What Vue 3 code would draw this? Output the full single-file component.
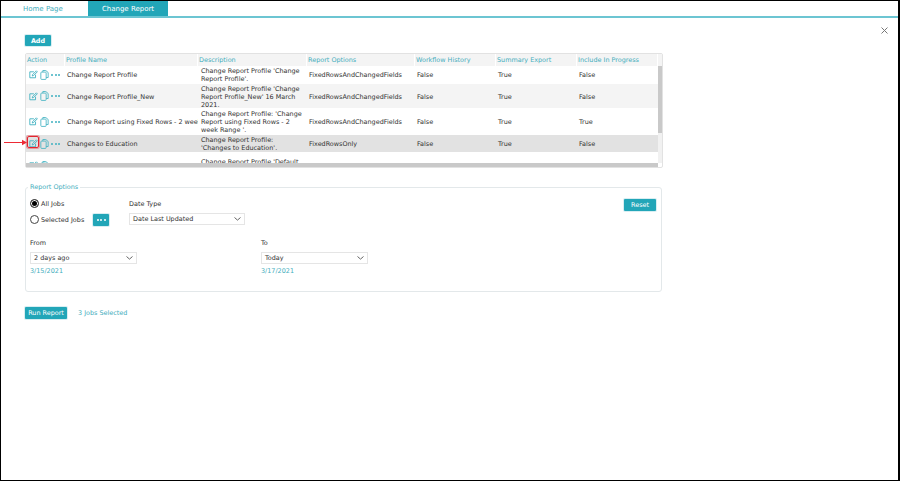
<template>
  <div class="page">
    <div class="tabs">
      <div class="tab">Home Page</div>
      <div class="tab active">Change Report</div>
    </div>
    <div class="content">
      <svg class="close" width="7" height="7" viewBox="0 0 7 7"><path d="M.5.5l6 6M6.5.5l-6 6" stroke="#777" fill="none" /></svg>
      <button class="btn add">Add</button>

      <div class="grid">
        <div class="head">
          <div v-for="c in columns" :key="c" class="hcell">{{ c }}</div>
        </div>
        <div class="body">
          <div v-for="(r, i) in rows" :key="i" class="row" :class="[r.cls]" :style="{ height: r.h + 'px' }">
            <div class="cell actions">
              <svg width="9" height="9" viewBox="0 0 11 11" fill="none" stroke="#3fb1c1" stroke-width="1.1">
                <path d="M8 5.8v3.7H1V2.2h5" />
                <path d="M4 7.3l.4-1.7L9 1l1.2 1.2-4.6 4.6z" />
              </svg>
              <svg width="9" height="10" viewBox="0 0 10 12" fill="none" stroke="#3fb1c1" stroke-width="1">
                <path d="M3 2.5V.6h3.5L9.4 3v6H7" />
                <rect x="0.6" y="2.5" width="6.4" height="8.8" rx="1" />
              </svg>
              <span class="dots"><i></i><i></i><i></i></span>
            </div>
            <div class="cell name">{{ r.name }}</div>
            <div class="cell desc">{{ r.desc }}</div>
            <div class="cell">{{ r.opt }}</div>
            <div class="cell">{{ r.wf }}</div>
            <div class="cell">{{ r.sum }}</div>
            <div class="cell">{{ r.inc }}</div>
          </div>
        </div>
        <div class="vbar"><div class="vthumb"></div></div>
        <div class="hbar"></div>
        <div class="redbox"></div>
        <svg class="arrow" width="24" height="7" viewBox="0 0 24 7">
          <path d="M0 3.5h19" stroke="#ed2a35" stroke-width="1" />
          <path d="M18 .8l5 2.7-5 2.7z" fill="#ed2a35" />
        </svg>
      </div>

      <fieldset class="options">
        <legend>Report Options</legend>
        <div class="top">
          <div class="radios">
            <label class="radio"><span class="dot on"></span>All Jobs</label>
            <label class="radio"><span class="dot"></span>Selected Jobs<button class="btn more"><span class="dots white"><i></i><i></i><i></i></span></button></label>
          </div>
          <div class="field datetype">
            <span class="lab">Date Type</span>
            <div class="select wide">Date Last Updated<svg width="7" height="4" viewBox="0 0 7 4"><path d="M.5.5l3 2.6 3-2.6" fill="none" stroke="#666" /></svg></div>
          </div>
          <button class="btn reset">Reset</button>
        </div>
        <div class="dates">
          <div class="field">
            <span class="lab">From</span>
            <div class="select">2 days ago<svg width="7" height="4" viewBox="0 0 7 4"><path d="M.5.5l3 2.6 3-2.6" fill="none" stroke="#666" /></svg></div>
            <span class="date">3/15/2021</span>
          </div>
          <div class="field">
            <span class="lab">To</span>
            <div class="select">Today<svg width="7" height="4" viewBox="0 0 7 4"><path d="M.5.5l3 2.6 3-2.6" fill="none" stroke="#666" /></svg></div>
            <span class="date">3/17/2021</span>
          </div>
        </div>
      </fieldset>

      <div class="run">
        <button class="btn runbtn">Run Report</button>
        <span class="selected">3 Jobs Selected</span>
      </div>
    </div>
  </div>
</template>

<script setup>
const columns = ['Action', 'Profile Name', 'Description', 'Report Options', 'Workflow History', 'Summary Export', 'Include In Progress'];

const rows = [
  { h: 18, name: 'Change Report Profile', desc: "Change Report Profile 'Change Report Profile'.", opt: 'FixedRowsAndChangedFields', wf: 'False', sum: 'True', inc: 'False' },
  { h: 25, cls: 'alt', name: 'Change Report Profile_New', desc: "Change Report Profile 'Change Report Profile_New' 16 March 2021.", opt: 'FixedRowsAndChangedFields', wf: 'False', sum: 'True', inc: 'False' },
  { h: 26, name: 'Change Report using Fixed Rows - 2 week Range', desc: "Change Report Profile: 'Change Report using Fixed Rows - 2 week Range '.", opt: 'FixedRowsAndChangedFields', wf: 'False', sum: 'True', inc: 'True' },
  { h: 18, cls: 'sel', name: 'Changes to Education', desc: "Change Report Profile: 'Changes to Education'.", opt: 'FixedRowsOnly', wf: 'False', sum: 'True', inc: 'False' },
  { h: 26, name: 'Default', desc: "Change Report Profile 'Default Report Profile'.", opt: 'FixedRowsOnly', wf: 'False', sum: 'True', inc: 'False' },
];
</script>

<style>
html, body {
  margin: 0;
  background: #fff;
}
</style>

<style scoped>
.page {
  box-sizing: border-box;
  width: 900px;
  height: 481px;
  border: 1px solid #000;
  border-right-width: 2px;
  font-family: "DejaVu Sans", sans-serif;
  font-size: 6.45px;
  color: #333;
  overflow: hidden;
}
.tabs {
  display: flex;
  height: 15px;
  padding-left: 1px;
  border-bottom: 2px solid #6cc5d2;
}
.tab {
  width: 66px;
  padding-left: 21px;
  line-height: 16px;
  color: #45aebd;
  font-size: 7px;
}
.tab.active {
  width: 80px;
  padding: 0;
  margin-left: -1px;
  text-align: center;
  background: #22a6b8;
  color: #fff;
}
.content {
  position: relative;
  padding: 17px 0 0 24px;
}
.close {
  position: absolute;
  top: 9px;
  right: 10px;
}
.btn {
  display: block;
  border: 0;
  padding: 0;
  border-radius: 1px;
  background: #22a6b8;
  color: #fff;
  font-family: inherit;
  font-size: 6.45px;
  font-weight: bold;
  box-shadow: 0 0 0 1px #d8eef2;
}
.add {
  width: 26px;
  height: 11px;
}
.grid {
  position: relative;
  box-sizing: border-box;
  width: 638px;
  height: 115px;
  margin-top: 7px;
  border: 1px solid #e2e2e2;
  border-radius: 2px;
}
.head, .row {
  display: grid;
  grid-template-columns: 39px 133px 109px 108px 81px 81px 1fr;
}
.head {
  height: 12px;
  background: #f4f4f4;
  padding-right: 4px;
}
.hcell {
  padding-left: 1px;
  line-height: 13px;
  color: #45aebd;
  white-space: nowrap;
  border-right: 1px solid #fff;
}
.body {
  height: 97px;
  overflow: hidden;
  margin-right: 4px;
}
.row {
  align-items: center;
  background: #fff;
  border-bottom: 1px solid #fff;
  box-sizing: border-box;
  padding-top: 1px;
}
.row.alt {
  background: #f4f4f4;
}
.row.sel {
  background: #e2e2e2;
}
.cell {
  padding-left: 2px;
  overflow: hidden;
  white-space: nowrap;
  line-height: 8px;
}
.cell.desc {
  white-space: normal;
  padding-left: 3px;
  padding-right: 2px;
}
.cell.actions {
  display: flex;
  align-items: center;
  gap: 2px;
  padding: 0 0 1px 3px;
  overflow: visible;
}
.dots {
  display: inline-flex;
  gap: 1.5px;
  margin-left: 0;
}
.dots i {
  width: 2px;
  height: 2px;
  border-radius: 50%;
  background: #3fb1c1;
}
.dots.white i {
  background: #fff;
}
.vbar {
  position: absolute;
  top: 12px;
  right: 0;
  bottom: 4px;
  width: 4px;
  background: #f1f1f1;
}
.vthumb {
  height: 67px;
  background: #c9c9c9;
}
.hbar {
  position: absolute;
  left: 0;
  right: 4px;
  bottom: 0;
  height: 4px;
  background: #c9c9c9;
}
.redbox {
  position: absolute;
  left: 1px;
  top: 82px;
  box-sizing: border-box;
  width: 12px;
  height: 12px;
  border: 1px solid #e3242f;
  border-radius: 2px;
  box-shadow: 0 0 0 1px rgba(234, 59, 69, 0.45);
}
.arrow {
  position: absolute;
  left: -22px;
  top: 85px;
}
.options {
  box-sizing: border-box;
  width: 637px;
  height: 109px;
  margin: 15px 0 0;
  padding: 9px 4px 0 4px;
  border: 1px solid #e3e8ea;
  border-radius: 3px;
}
legend {
  padding: 0 2px;
  margin-left: -2px;
  color: #45aebd;
  line-height: 8px;
}
.top {
  display: flex;
  align-items: flex-start;
}
.radios {
  width: 99px;
  display: flex;
  flex-direction: column;
  gap: 7px;
  margin-top: -1px;
}
.radio {
  display: flex;
  align-items: center;
  gap: 2px;
  height: 9px;
}
.dot {
  box-sizing: border-box;
  width: 9px;
  height: 9px;
  border: 1px solid #444;
  border-radius: 50%;
  background: #fff;
}
.dot.on {
  background: #000;
  box-shadow: inset 0 0 0 1px #fff;
}
.more {
  display: flex;
  align-items: center;
  justify-content: center;
  width: 16px;
  height: 12px;
  margin-left: 7px;
}
.field {
  display: flex;
  flex-direction: column;
}
.datetype {
  flex: 1;
}
.lab {
  line-height: 8px;
}
.select {
  box-sizing: border-box;
  display: flex;
  align-items: center;
  justify-content: space-between;
  width: 107px;
  height: 12px;
  margin-top: 5px;
  padding: 0 3px;
  border: 1px solid #e5e5e5;
  background: #fff;
}
.select.wide {
  width: 116px;
}
.reset {
  width: 32px;
  height: 12px;
  margin: -1px 1px 0 0;
  font-weight: normal;
}
.dates {
  display: flex;
  gap: 124px;
  margin-top: 14px;
}
.date {
  margin-top: 3px;
  color: #45aebd;
  line-height: 8px;
}
.run {
  display: flex;
  align-items: center;
  gap: 11px;
  margin-top: 15px;
}
.runbtn {
  width: 42px;
  height: 12px;
  font-weight: normal;
}
.selected {
  color: #45aebd;
}
</style>
